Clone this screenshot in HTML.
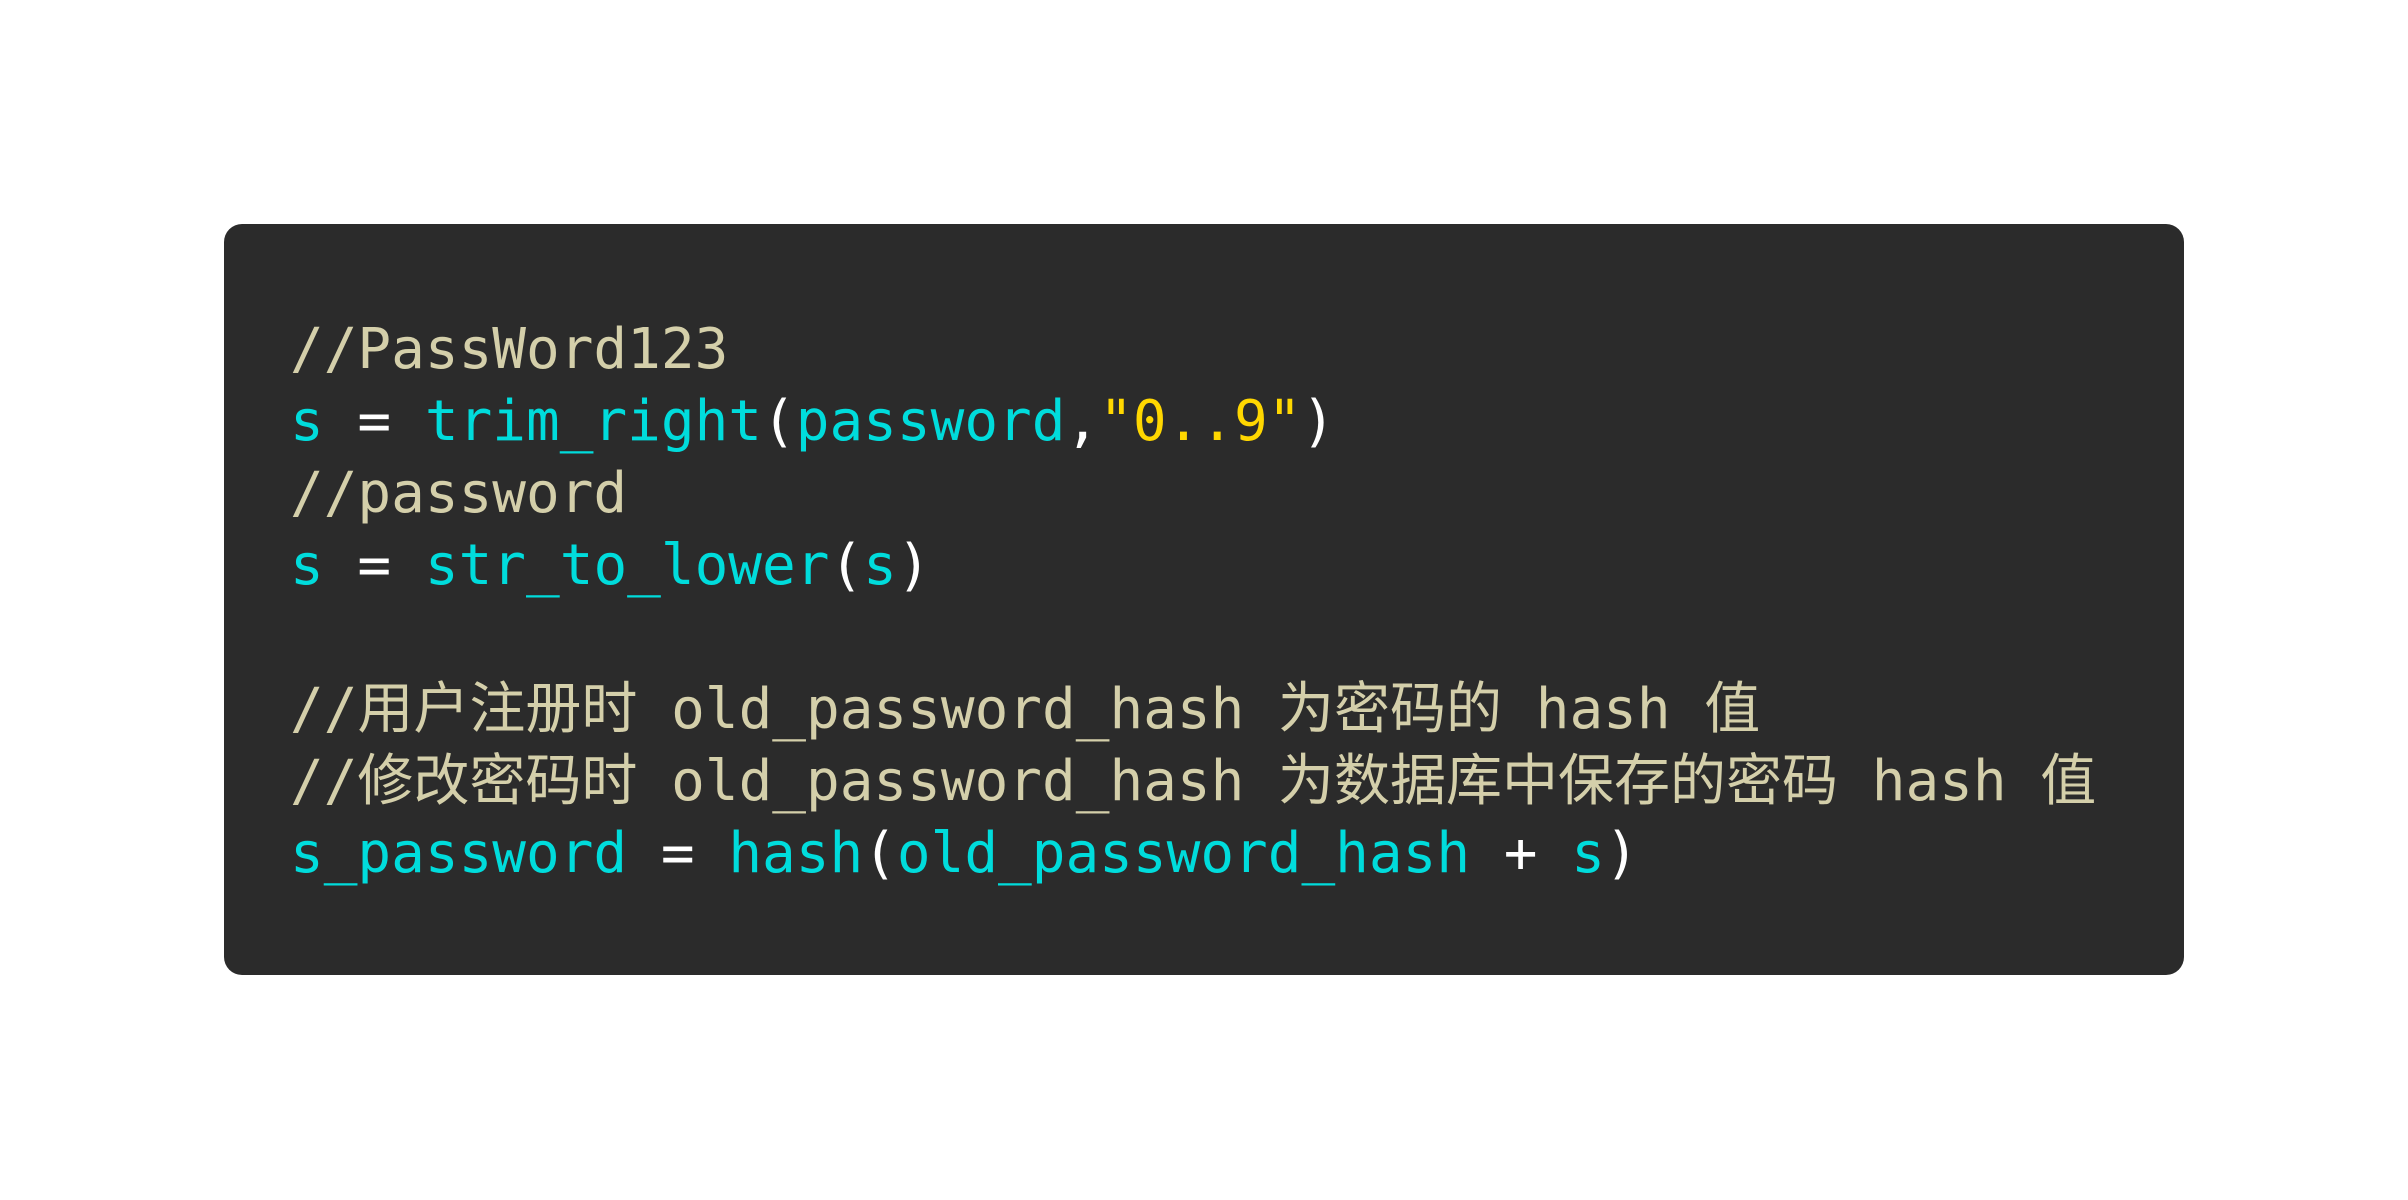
<!DOCTYPE html>
<html><head><meta charset="utf-8"><style>
html,body{margin:0;padding:0;background:#fff;width:2408px;height:1200px;overflow:hidden}
.box{position:absolute;left:224px;top:224px;width:1960px;height:751px;background:#2b2b2b;border-radius:18px}
pre{position:absolute;left:290px;top:314px;margin:0;font-family:"DejaVu Sans Mono","Noto Sans CJK SC",monospace;font-size:56px;line-height:72px;color:#fff;white-space:pre}
.c{color:#d4cfaa}.v{color:#00dcdc}.y{color:#ffd700}.w{color:#fafafa}
</style></head><body>
<div class="box"></div>
<pre><span class="c">//PassWord123</span>
<span class="v">s</span> = <span class="v">trim_right</span>(<span class="v">password</span>,<span class="y">"0..9"</span>)
<span class="c">//password</span>
<span class="v">s</span> = <span class="v">str_to_lower</span>(<span class="v">s</span>)

<span class="c">//用户注册时 old_password_hash 为密码的 hash 值</span>
<span class="c">//修改密码时 old_password_hash 为数据库中保存的密码 hash 值</span>
<span class="v">s_password</span> = <span class="v">hash</span>(<span class="v">old_password_hash</span> + <span class="v">s</span>)</pre>
</body></html>
